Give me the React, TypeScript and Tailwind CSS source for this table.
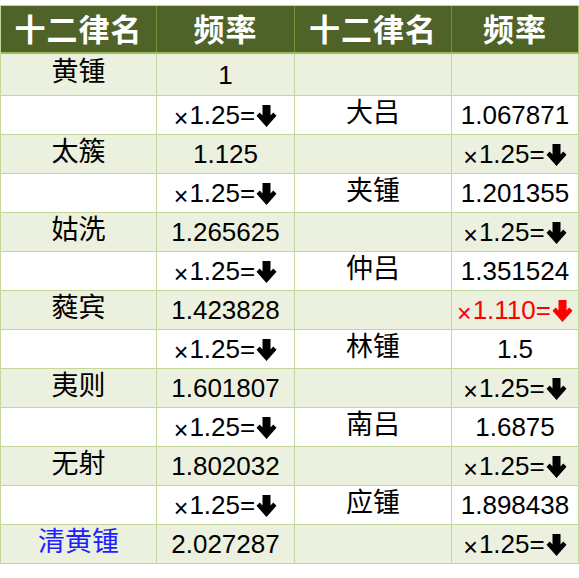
import React from "react";

const cjk = "font-['Liberation_Sans','Noto_Sans_CJK_SC',sans-serif]";

function Arrow({ className }: { className?: string }) {
  return (
    <svg viewBox="0 0 20 22" className={className} width="21" height="22">
      <path d="M6 0H14V10.5L16.8 7.5L20 10.8L10 22L0 10.8L3.2 7.5L6 10.5Z" fill="currentColor" />
    </svg>
  );
}

function Mul({ factor, red }: { factor: string; red?: boolean }) {
  return (
    <span className={`flex items-end ${red ? "text-[#ff0000]" : "text-black"}`}>
      <span className="text-[25px] leading-none mr-[1px] translate-y-[3px]">×</span>
      <span className="leading-none">{factor}=</span>
      <Arrow className="ml-[1px] -translate-y-[1px]" />
    </span>
  );
}

const rows: [string, string, string, string][] = [
  ["黄锺", "1", "", ""],
  ["", "*1.25", "大吕", "1.067871"],
  ["太簇", "1.125", "", "*1.25"],
  ["", "*1.25", "夹锺", "1.201355"],
  ["姑洗", "1.265625", "", "*1.25"],
  ["", "*1.25", "仲吕", "1.351524"],
  ["蕤宾", "1.423828", "", "!1.110"],
  ["", "*1.25", "林锺", "1.5"],
  ["夷则", "1.601807", "", "*1.25"],
  ["", "*1.25", "南吕", "1.6875"],
  ["无射", "1.802032", "", "*1.25"],
  ["", "*1.25", "应锺", "1.898438"],
  ["清黄锺", "2.027287", "", "*1.25"],
];

function Value({ v }: { v: string }) {
  if (v.startsWith("*")) return <Mul factor={v.slice(1)} />;
  if (v.startsWith("!")) return <Mul factor={v.slice(1)} red />;
  return <span className="leading-none">{v}</span>;
}

export default function App() {
  return (
    <div className={`bg-white w-[579px] h-[578px] pt-[5px] ${cjk}`}>
      <div className="border-l border-t border-[#c4d79b] w-[579px]">
        <div className="grid grid-cols-[156px_138px_157px_127px] h-[48px] bg-[#4f6228] border-b-2 border-[#9bbb59] text-white font-bold text-[31px]">
          {["十二律名", "频率", "十二律名", "频率"].map((h, i) => (
            <div
              key={i}
              className={`flex items-center justify-center tracking-[1px] ${i < 3 ? "border-r border-[#76933c]" : "border-r border-[#9bbb59]"}`}
            >
              <span className="leading-none translate-y-[1px]">{h}</span>
            </div>
          ))}
        </div>
        {rows.map((r, ri) => (
          <div
            key={ri}
            className={`grid grid-cols-[156px_138px_157px_127px] border-b border-[#c4d79b] text-[26px] ${
              ri === 0 ? "h-[42px]" : "h-[39px]"
            } ${ri % 2 === 0 ? "bg-[#ebf1de]" : "bg-white"}`}
          >
            <div className="flex items-center justify-center border-r border-[#c4d79b]">
              <span className={`leading-none -translate-y-[2px] text-[27px] ${ri === 12 ? "text-[#1f1fff]" : "text-black"}`}>
                {r[0]}
              </span>
            </div>
            <div className="flex items-center justify-center border-r border-[#c4d79b] text-black">
              <Value v={r[1]} />
            </div>
            <div className="flex items-center justify-center border-r border-[#c4d79b]">
              <span className="leading-none -translate-y-[2px] text-[27px] text-black">{r[2]}</span>
            </div>
            <div className="flex items-center justify-center border-r border-[#c4d79b] text-black">
              <Value v={r[3]} />
            </div>
          </div>
        ))}
      </div>
    </div>
  );
}
